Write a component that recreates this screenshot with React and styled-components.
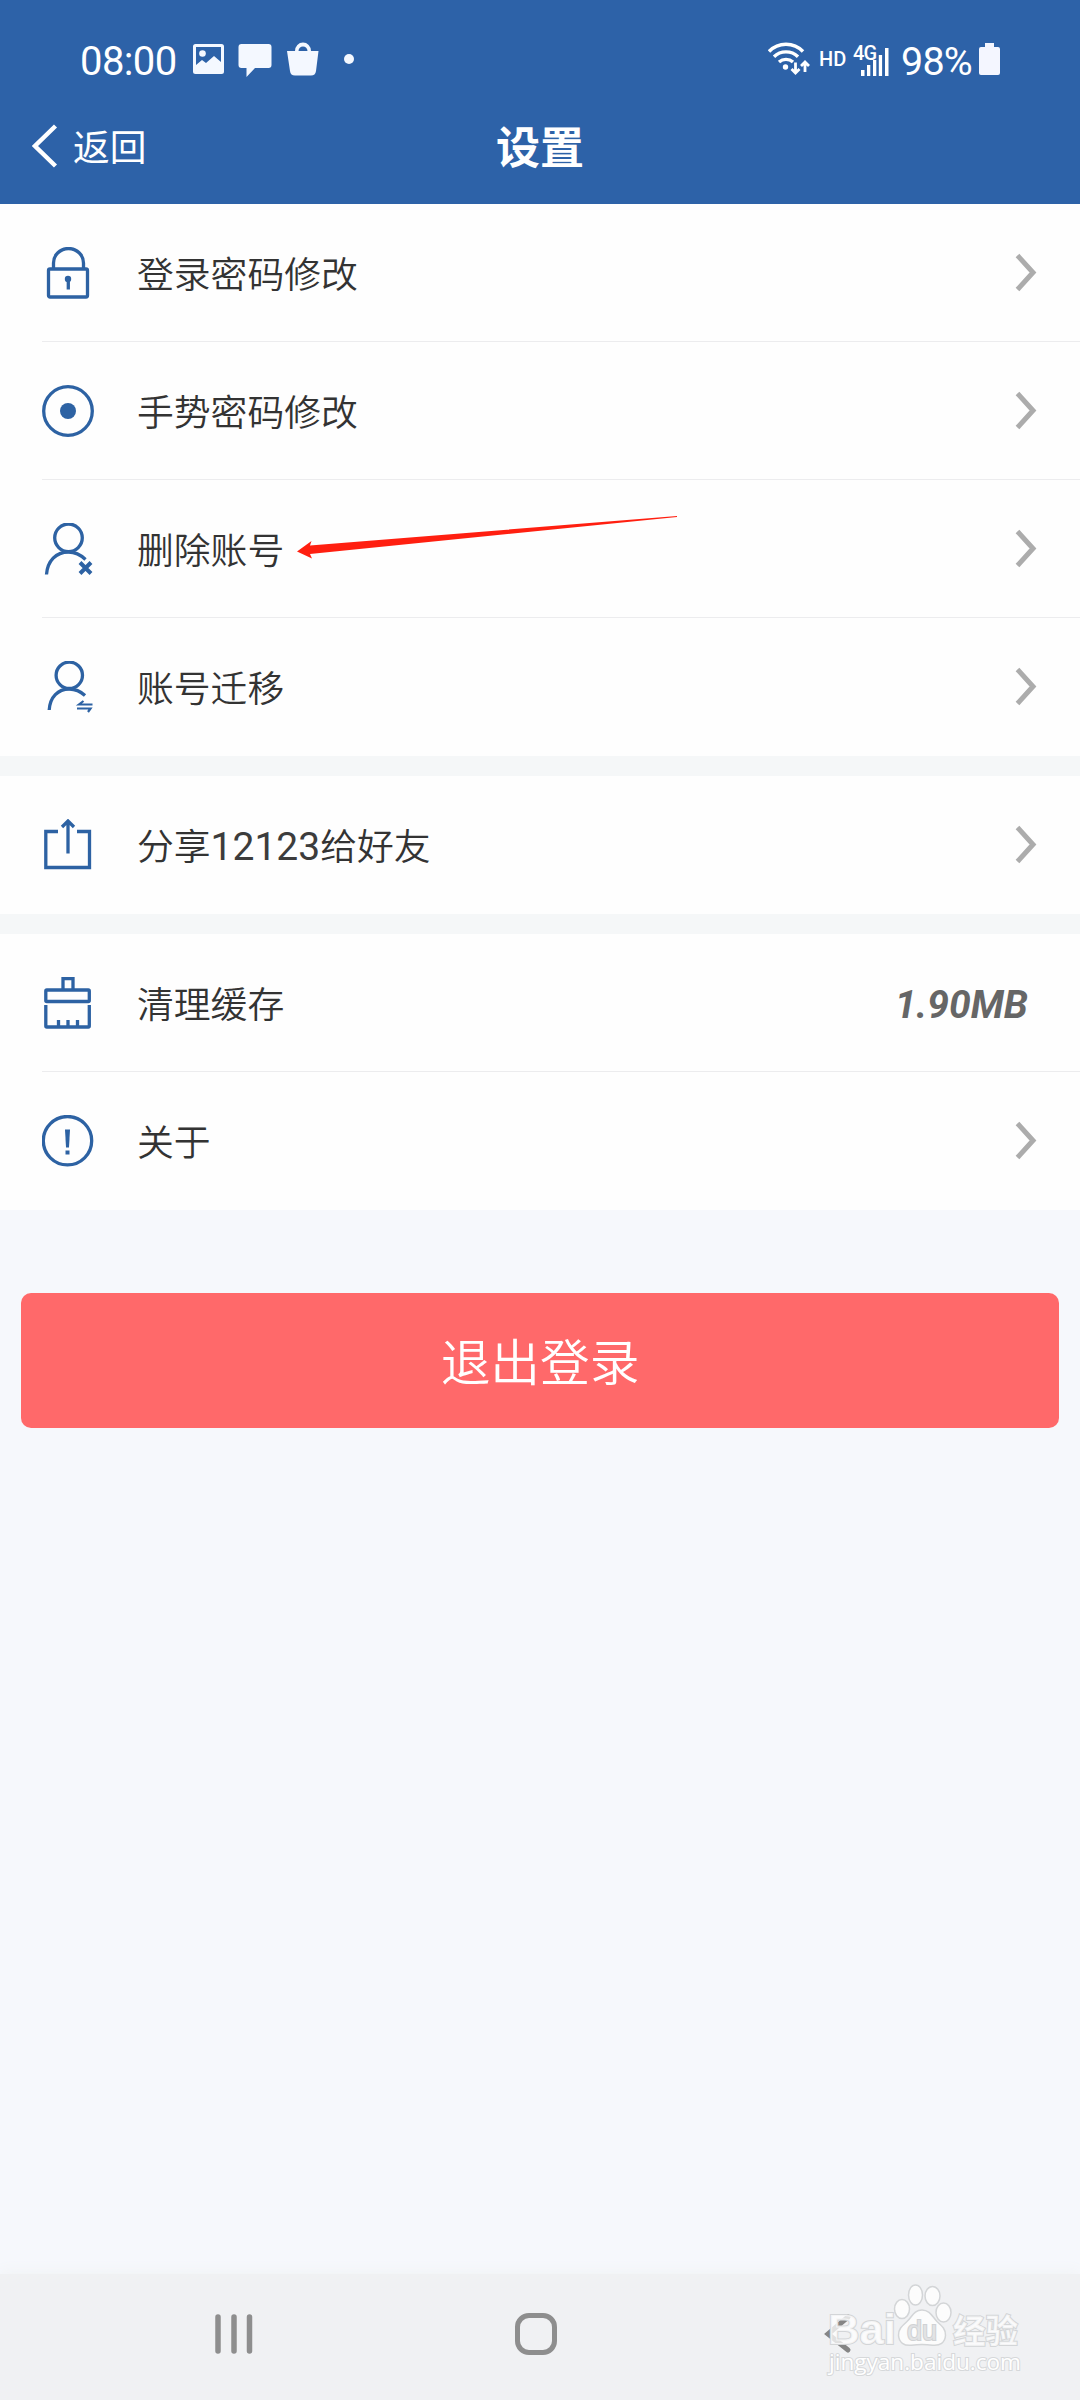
import styled, { createGlobalStyle } from "styled-components";

const BLUE = "#2d62a3";

const groups = [
    [
        { label: "登录密码修改", icon: LockIcon },
        { label: "手势密码修改", icon: GestureIcon },
        { label: "删除账号", icon: UserRemoveIcon, pointed: true },
        { label: "账号迁移", icon: UserMoveIcon },
    ],
    [
        { label: "分享", number: "12123", rest: "给好友", icon: ShareIcon },
    ],
    [
        { label: "清理缓存", icon: BrushIcon, value: "1.90MB" },
        { label: "关于", icon: AboutIcon },
    ],
];

function LockIcon() {
    return (
        <RowIcon viewBox="0 0 52 52">
            <path d="M11.5 21V16a15 14.5 0 0 1 30 0V21" />
            <rect x="6.5" y="22" width="39" height="28" rx="1.5" />
            <circle cx="26" cy="32" r="3.2" fill={BLUE} stroke="none" />
            <path d="M26.3 32v10.5" />
        </RowIcon>
    );
}

function GestureIcon() {
    return (
        <RowIcon viewBox="0 0 52 52">
            <circle cx="26" cy="26" r="24.3" />
            <circle cx="26" cy="26" r="8" fill={BLUE} stroke="none" />
        </RowIcon>
    );
}

function UserRemoveIcon() {
    return (
        <RowIcon viewBox="0 0 52 52">
            <circle cx="26.5" cy="14.8" r="13.8" />
            <path d="M4.5 51.5C5.5 38 14 29 26.5 29c6.5 0 12 2.7 17 7.5" />
            <path d="M38 39.5l11 11M49 39.5l-11 11" strokeWidth="4" />
        </RowIcon>
    );
}

function UserMoveIcon() {
    return (
        <RowIcon viewBox="0 0 52 52">
            <circle cx="27.3" cy="14.3" r="13.2" />
            <path d="M7.2 49C8 36 16 28 27.3 28c6 0 11 2.2 15.7 6.5" />
            <path d="M50.5 43.5H37l4.5-3.5M35 47.5h13.5l-2.5 3.5" strokeWidth="2.2" />
        </RowIcon>
    );
}

function ShareIcon() {
    return (
        <RowIcon viewBox="0 0 52 52">
            <path d="M16 12.5H3.8v36H47.5v-36H35" />
            <path d="M26 34.5V3M20 8l6-6 6 6" />
        </RowIcon>
    );
}

function BrushIcon() {
    return (
        <RowIcon viewBox="0 0 52 52">
            <path d="M21 12.5V1.5h10v11" />
            <rect x="3.8" y="13" width="43.5" height="11.5" rx="1" />
            <path d="M3.8 28v21q0 1 1 1h41.5q1 0 1-1V28" />
            <path d="M16.5 43v7M26 43v7M35.5 43v7" />
        </RowIcon>
    );
}

function AboutIcon() {
    return (
        <RowIcon viewBox="0 0 52 52">
            <circle cx="25.5" cy="25.7" r="24.2" />
            <path d="M23 14.5h5l-1 18h-3z" fill={BLUE} stroke="none" />
            <rect x="23.5" y="35.5" width="4" height="4" fill={BLUE} stroke="none" />
        </RowIcon>
    );
}

function StatusBar() {
    return (
        <Status>
            <Time>08:00</Time>
            <Notifications viewBox="0 0 164 36">
                <path fillRule="evenodd" d="M2.5 2h26q2.5 0 2.5 2.5v25q0 2.5-2.5 2.5h-26Q0 32 0 29.5v-25Q0 2 2.5 2zM3 5v18l6-5 4 3 8-7 7 6V5z" />
                <circle cx="9.5" cy="11.5" r="3.3" />
                <path d="M48.5 2h27q3 0 3 3v18q0 3-3 3H62l-8.5 9V26h-5q-3 0-3-3V5q0-3 3-3z" />
                <path fillRule="evenodd" d="M94 9h8a8 8.5 0 0 1 16 0h7.5l-2.5 20q-.6 4.5-5 4.5H102q-4.5 0-5-4.5zM105.5 9h9a4.5 4.5 0 0 0-9 0z" />
                <circle cx="156" cy="17" r="5" />
            </Notifications>
            <Spacer />
            <Wifi viewBox="0 0 42 34">
                <g fill="none" stroke="#fff" strokeWidth="3.4">
                    <path d="M1 9.5a23.5 23.5 0 0 1 34 0M6 14.8a17 17 0 0 1 24 0M11 20a10.5 10.5 0 0 1 14 0" />
                    <path d="M27.5 20.5v10M23.5 27l4 4 4-4M37 30V20M33 24l4-4 4 4" strokeWidth="2.8" />
                </g>
                <circle cx="17.5" cy="25" r="2.7" fill="#fff" />
            </Wifi>
            <Hd>HD</Hd>
            <Signal>
                <Network>4G</Network>
                <svg width="30" height="30" viewBox="0 0 30 30">
                    <path d="M1 23h3.5v6H1zM7 18h3.3v11H7zM13 13h3.3v16H13zM18.8 8h3.3v21h-3.3zM25 1h3.5v28H25z" fill="#fff" />
                </svg>
            </Signal>
            <Percent>98%</Percent>
            <Battery viewBox="0 0 21 34">
                <path d="M6 1h9v4h4q2 0 2 2v24q0 2-2 2H2q-2 0-2-2V7q0-2 2-2h4z" />
            </Battery>
        </Status>
    );
}

function SettingRow({ item }) {
    const Icon = item.icon;

    return (
        <Row>
            <Icon />
            <RowBody>
                <Label>
                    {item.label}
                    {item.number && <Digits>{item.number}</Digits>}
                    {item.rest}
                </Label>
                {item.value ? (
                    <Value>{item.value}</Value>
                ) : (
                    <Chevron viewBox="0 0 24 42">
                        <path d="M3.5 3.5L19 20.5 3.5 37.5" />
                    </Chevron>
                )}
            </RowBody>
            {item.pointed && (
                <Pointer viewBox="0 0 380 46">
                    <path d="M0 36.5L14.5 26l-1.5 4.5L380 1v1L13 39l2 4.5z" fill="#ff1f10" />
                </Pointer>
            )}
        </Row>
    );
}

function Watermark() {
    return (
        <Mark viewBox="0 0 210 100">
            <g fill="#fcfcfc" stroke="#d3d5d7" strokeWidth="1.5">
                <ellipse cx="82" cy="29" rx="7.5" ry="9.5" />
                <ellipse cx="95.5" cy="15" rx="7" ry="10" />
                <ellipse cx="112.5" cy="16" rx="7.5" ry="9.5" />
                <ellipse cx="123.5" cy="32.5" rx="7.5" ry="9.5" />
                <path d="M102 30c-8 0-10 7-15 11.5-5 4.5-9 8-8.5 14 .6 7 5.5 10.5 13 9.7 7-.8 14-.8 21 0 7.5.8 12.5-2.5 13-9.7.5-6-3.5-9.5-8.5-14C112.5 37 110 30 102 30z" />
            </g>
            <BrandText x="8" y="64" fontSize="43" textLength="68" lengthAdjust="spacingAndGlyphs">Bai</BrandText>
            <DuText x="87" y="60" fontSize="27" textLength="30" lengthAdjust="spacingAndGlyphs">du</DuText>
            <BrandText x="133" y="63" fontSize="33" textLength="65" lengthAdjust="spacingAndGlyphs">经验</BrandText>
            <UrlText x="9" y="90" fontSize="22" textLength="192" lengthAdjust="spacingAndGlyphs">jingyan.baidu.com</UrlText>
        </Mark>
    );
}

export default function App() {
    return (
        <>
            <GlobalStyle />
            <Screen>
                <Header>
                    <StatusBar />
                    <TitleBar>
                        <Back>
                            <svg width="26" height="46" viewBox="0 0 26 46">
                                <path d="M23.5 3L3 23l20.5 20" fill="none" stroke="#fff" strokeWidth="4.4" />
                            </svg>
                            <BackText>返回</BackText>
                        </Back>
                        <Title>设置</Title>
                    </TitleBar>
                </Header>
                <Groups>
                    {groups.map((items, index) => (
                        <Group key={index}>
                            {items.map((item) => <SettingRow key={item.label} item={item} />)}
                        </Group>
                    ))}
                </Groups>
                <Logout>退出登录</Logout>
                <NavBar>
                    <svg width="40" height="42" viewBox="0 0 40 42">
                        <path d="M4 4v34M20 4v34M35.5 4v34" stroke="#8e8e8e" strokeWidth="5.5" strokeLinecap="round" />
                    </svg>
                    <Home />
                    <NavBack viewBox="0 0 28 42">
                        <path d="M24 4L4 21l20 16" fill="none" stroke="#858585" strokeWidth="5" strokeLinecap="round" />
                    </NavBack>
                    <Watermark />
                </NavBar>
            </Screen>
        </>
    );
}

const GlobalStyle = createGlobalStyle`
    * {
        box-sizing: border-box;
    }
    body {
        margin: 0;
        font-family: Roboto, "Noto Sans CJK SC", sans-serif;
        color: #333;
    }
    svg {
        display: block;
        flex-shrink: 0;
    }
`;

const Screen = styled.div`
    width: 1080px;
    height: 2400px;
    display: flex;
    flex-direction: column;
    background-color: #f6f8fc;
    overflow: hidden;
`;

const Header = styled.header`
    height: 204px;
    background-color: #2d62a8;
    color: #fff;
`;

const Status = styled.div`
    height: 90px;
    padding: 32px 80px 0 80px;
    display: flex;
    align-items: flex-start;
    line-height: 60px;
`;

const Time = styled.span`
    width: 113px;
    font-size: 40px;
    letter-spacing: -0.6px;
`;

const Notifications = styled.svg`
    width: 164px;
    height: 36px;
    margin-top: 10px;
    fill: #f4f8ff;
`;

const Spacer = styled.div`
    flex: 1;
`;

const Wifi = styled.svg`
    width: 42px;
    height: 34px;
    margin: 10px 1px 0 0;
`;

const Hd = styled.span`
    width: 34px;
    margin-left: 8px;
    font-size: 20px;
    font-weight: 500;
    line-height: 55px;
`;

const Signal = styled.div`
    position: relative;
    width: 36px;
    height: 30px;
    margin-top: 15px;
    padding-left: 7px;
`;

const Network = styled.span`
    position: absolute;
    left: 0;
    top: -5px;
    font-size: 20px;
    font-weight: 500;
    line-height: 22px;
    letter-spacing: -0.8px;
`;

const Percent = styled.span`
    width: 78px;
    margin-left: 12px;
    font-size: 39.5px;
    letter-spacing: -0.8px;
`;

const Battery = styled.svg`
    width: 21px;
    height: 34px;
    margin-top: 10px;
    fill: #f4f6ff;
`;

const TitleBar = styled.div`
    height: 112px;
    padding: 0 32px;
    display: grid;
    grid-template-columns: 1fr auto 1fr;
    align-items: center;
`;

const Back = styled.div`
    display: flex;
    align-items: center;
    gap: 15px;
    font-size: 36.7px;
    line-height: 50px;
`;

const BackText = styled.span`
    padding-top: 5px;
`;

const Title = styled.h1`
    margin: 0 0 2px;
    font-size: 44px;
    font-weight: 700;
`;

const Groups = styled.main`
    display: flex;
    flex-direction: column;
    gap: 20px;
    background-color: #f5f7f8;
`;

const Group = styled.section`
    background-color: #fefefe;
`;

const Row = styled.div`
    position: relative;
    height: 138px;
    padding-left: 42px;
    display: flex;
    align-items: center;
    gap: 43px;
    border-bottom: 1px solid transparent;
    &:not(:last-child) {
        background: linear-gradient(#ececee, #ececee) 42px 100% / 1038px 1px no-repeat border-box;
    }
`;

const RowIcon = styled.svg`
    width: 52px;
    height: 52px;
    fill: none;
    stroke: ${BLUE};
    stroke-width: 3.3;
`;

const RowBody = styled.div`
    flex: 1;
    display: flex;
    align-items: center;
    justify-content: space-between;
    padding-right: 42px;
`;

const Label = styled.span`
    padding-top: 6px;
    font-size: 36.8px;
    font-weight: 350;
    line-height: 54px;
`;

const Digits = styled.span`
    font-size: 39px;
    font-weight: 400;
    color: #3c3c3c;
`;

const Value = styled.span`
    margin-right: 10px;
    padding-top: 4px;
    font-size: 39px;
    font-style: italic;
    font-weight: 700;
    color: #666;
`;

const Chevron = styled.svg`
    width: 24px;
    height: 42px;
    fill: none;
    stroke: #acacac;
    stroke-width: 5;
`;

// lies over the row, from the label to the middle of the screen
const Pointer = styled.svg`
    position: absolute;
    left: 297px;
    top: 35px;
    width: 380px;
    height: 46px;
`;

const Logout = styled.button`
    height: 135px;
    margin: 83px 21px 0;
    padding: 0 0 3px;
    border: none;
    border-radius: 10px;
    background-color: #ff696a;
    color: #fff;
    font-family: inherit;
    font-size: 49.7px;
    font-weight: 350;
`;

const NavBar = styled.nav`
    position: relative;
    height: 126px;
    margin-top: auto;
    padding: 0 228px 6px 214px;
    display: flex;
    align-items: center;
    justify-content: space-between;
    background-color: #f0f1f3;
    box-shadow: 0 -4px 12px #f2f4f6;
`;

const Home = styled.div`
    width: 42px;
    height: 42px;
    margin-right: 6px;
    border: 5.5px solid #8e8e8e;
    border-radius: 14px;
`;

const NavBack = styled.svg`
    width: 28px;
    height: 42px;
`;

const Mark = styled.svg`
    position: absolute;
    left: 820px;
    top: 6px;
    width: 210px;
    height: 100px;
`;

const BrandText = styled.text`
    font-family: "Liberation Sans", "Noto Sans CJK SC", sans-serif;
    font-weight: 700;
    fill: #fff;
    fill-opacity: 0.75;
    stroke: #d3d5d7;
    stroke-width: 2;
    paint-order: stroke;
`;

const DuText = styled(BrandText)`
    font-weight: 400;
    fill: #e6e7e8;
    stroke: #d0d2d4;
`;

const UrlText = styled.text`
    font-family: "Open Sans", sans-serif;
    fill: #fff;
    stroke: #d6d8da;
    stroke-width: 2;
    paint-order: stroke;
`;
